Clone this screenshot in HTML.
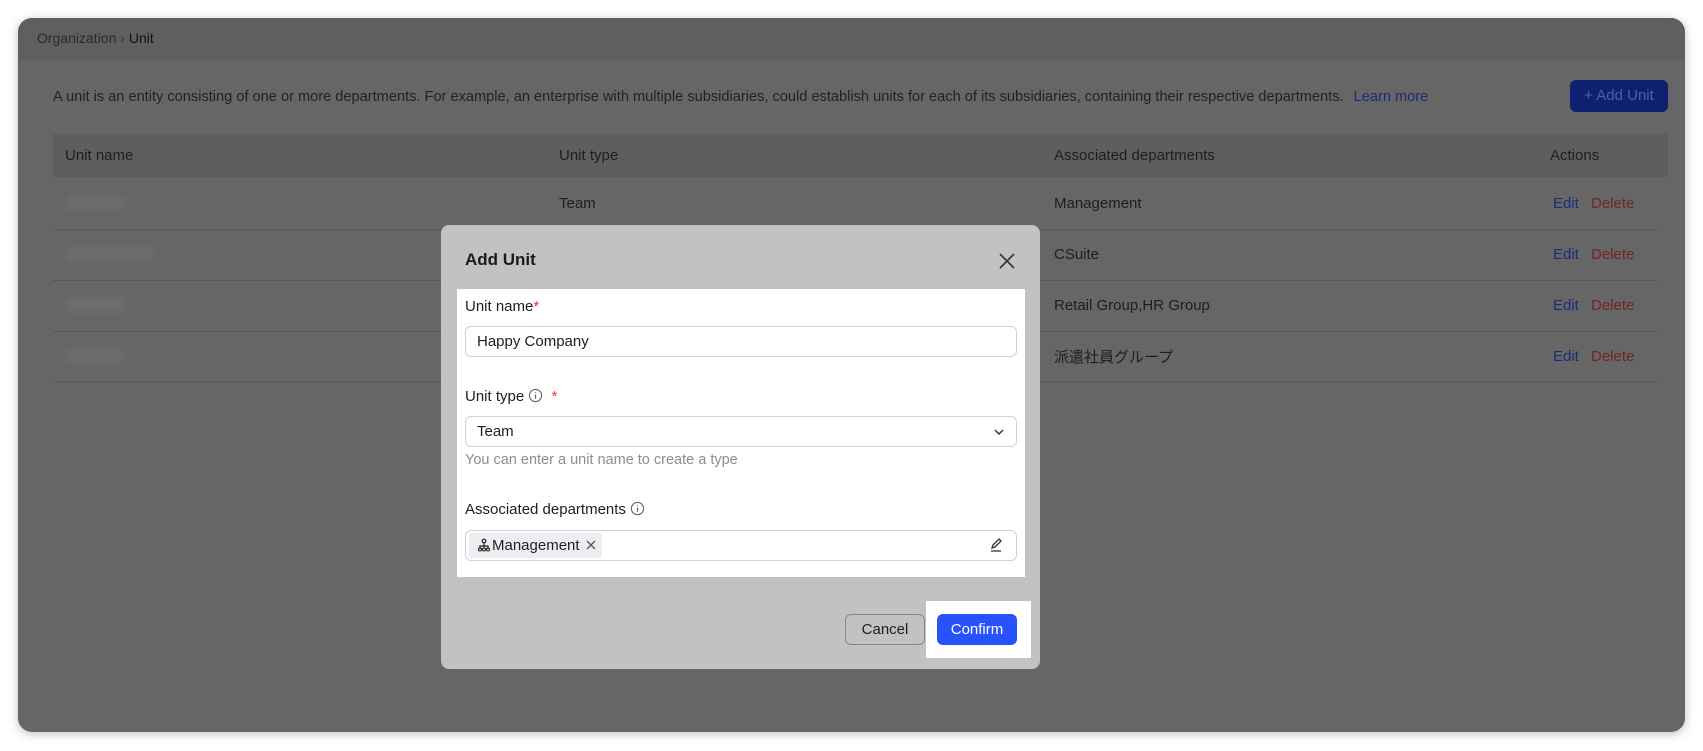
<!DOCTYPE html>
<html><head><meta charset="utf-8"><style>
*{box-sizing:border-box;margin:0;padding:0}
body{width:1703px;height:751px;background:#fff;font-family:"Liberation Sans","Noto Sans CJK JP",sans-serif;position:relative;overflow:hidden;color:#1f1f1f}
.win{position:absolute;left:18px;top:18px;width:1667px;height:714px;border-radius:14px;background:#666;overflow:hidden;box-shadow:0 2px 10px rgba(0,0,0,.25)}
.hdr{position:absolute;left:0;top:0;right:0;height:42px;background:#5f5f5f}
.a{position:absolute;white-space:nowrap}
.t{font-size:15px;color:#1e1e1e}
.sep{position:absolute;left:35px;width:1605px;height:1px;background:#565656}
.blur{position:absolute;background:#6e6e6e;filter:blur(4px);border-radius:6px}
.modal{position:absolute;left:441px;top:225px;width:599px;height:444px;background:#c2c2c2;border-radius:8px}
.inp{position:absolute;background:#fff;border:1px solid #cfd1d6;border-radius:6px}
.e{color:#1c2c78}.d{color:#782222}
</style></head><body>
<div class="win">
 <div class="hdr"></div>
 <div class="a" style="left:19px;top:12px;font-size:14px;color:#2a2a2a">Organization <span style="color:#333">&#x203A;</span> <span style="color:#111">Unit</span></div>
 <div class="a" style="left:35px;top:71px;font-size:14.6px;color:#222">A unit is an entity consisting of one or more departments. For example, an enterprise with multiple subsidiaries, could establish units for each of its subsidiaries, containing their respective departments. <span class="e" style="margin-left:6px">Learn more</span></div>
 <div class="a" style="left:1552px;top:62px;width:98px;height:32px;background:#102070;border-radius:6px;color:#5060a0;font-size:15px;line-height:32px;text-align:center">+ Add Unit</div>
 <div class="a" style="left:35px;top:116px;width:1615px;height:43px;background:#5e5e5e"></div>
 <div class="a t" style="left:47px;top:129px">Unit name</div>
 <div class="a t" style="left:541px;top:129px">Unit type</div>
 <div class="a t" style="left:1036px;top:129px">Associated departments</div>
 <div class="a t" style="left:1532px;top:129px">Actions</div>
 <div class="blur" style="left:47px;top:178px;width:60px;height:14px"></div>
 <div class="blur" style="left:47px;top:229px;width:90px;height:14px"></div>
 <div class="blur" style="left:47px;top:280px;width:60px;height:14px"></div>
 <div class="blur" style="left:47px;top:331px;width:60px;height:14px"></div>
 <div class="a t" style="left:541px;top:177px">Team</div>
 <div class="a t" style="left:1036px;top:177px">Management</div>
 <div class="a t" style="left:1036px;top:228px">CSuite</div>
 <div class="a t" style="left:1036px;top:279px">Retail Group,HR Group</div>
 <div class="a t" style="left:1036px;top:328px">派遣社員グループ</div>
 <div class="sep" style="top:211px"></div><div class="sep" style="top:262px"></div><div class="sep" style="top:313px"></div><div class="sep" style="top:363px"></div>
 <div class="a e" style="left:1535px;top:177px;font-size:15px">Edit</div><div class="a d" style="left:1573px;top:177px;font-size:15px">Delete</div>
 <div class="a e" style="left:1535px;top:228px;font-size:15px">Edit</div><div class="a d" style="left:1573px;top:228px;font-size:15px">Delete</div>
 <div class="a e" style="left:1535px;top:279px;font-size:15px">Edit</div><div class="a d" style="left:1573px;top:279px;font-size:15px">Delete</div>
 <div class="a e" style="left:1535px;top:330px;font-size:15px">Edit</div><div class="a d" style="left:1573px;top:330px;font-size:15px">Delete</div>
</div>
<div class="modal"></div>
<div class="a" style="left:465px;top:250px;font-size:17px;font-weight:bold;color:#1a1a1a">Add Unit</div>
<svg class="a" style="left:998px;top:252px" width="18" height="18" viewBox="0 0 18 18"><path d="M2 2L16 16M16 2L2 16" stroke="#333" stroke-width="1.6"/></svg>
<div class="a" style="left:457px;top:289px;width:568px;height:288px;background:#fff"></div>
<div class="a t" style="left:465px;top:298px">Unit name<span style="color:#e33">*</span></div>
<div class="inp" style="left:465px;top:326px;width:552px;height:31px"></div>
<div class="a t" style="left:477px;top:333px">Happy Company</div>
<div class="a t" style="left:465px;top:388px">Unit type <svg width="15" height="15" viewBox="0 0 16 16" style="vertical-align:-2px"><circle cx="8" cy="8" r="6.5" fill="none" stroke="#666" stroke-width="1.2"/><path d="M8 7v4.5M8 4.5v1" stroke="#666" stroke-width="1.4"/></svg> <span style="color:#e33;margin-left:4px">*</span></div>
<div class="inp" style="left:465px;top:416px;width:552px;height:31px"></div>
<div class="a t" style="left:477px;top:423px">Team</div>
<svg class="a" style="left:993px;top:427px" width="12" height="10" viewBox="0 0 12 10"><path d="M2 3l4 4 4-4" stroke="#333" stroke-width="1.5" fill="none"/></svg>
<div class="a" style="left:465px;top:452px;font-size:14.5px;color:#8a8d93">You can enter a unit name to create a type</div>
<div class="a t" style="left:465px;top:501px">Associated departments <svg width="15" height="15" viewBox="0 0 16 16" style="vertical-align:-2px"><circle cx="8" cy="8" r="6.5" fill="none" stroke="#666" stroke-width="1.2"/><path d="M8 7v4.5M8 4.5v1" stroke="#666" stroke-width="1.4"/></svg></div>
<div class="inp" style="left:465px;top:530px;width:552px;height:31px"></div>
<div class="a" style="left:469px;top:533px;width:133px;height:25px;background:#eceef1;border-radius:3px"></div>
<svg class="a" style="left:477px;top:538px" width="14" height="14" viewBox="0 0 14 14"><circle cx="7" cy="3" r="1.8" fill="none" stroke="#222" stroke-width="1.2"/><path d="M7 5v3M3 11V8h8v3" fill="none" stroke="#222" stroke-width="1.2"/><circle cx="3" cy="11.5" r="1.5" fill="none" stroke="#222" stroke-width="1.1"/><circle cx="7" cy="11.5" r="1.5" fill="none" stroke="#222" stroke-width="1.1"/><circle cx="11" cy="11.5" r="1.5" fill="none" stroke="#222" stroke-width="1.1"/><path d="M7 8v2" stroke="#222" stroke-width="1.2"/></svg>
<div class="a t" style="left:492px;top:537px">Management</div>
<svg class="a" style="left:585px;top:539px" width="12" height="12" viewBox="0 0 12 12"><path d="M2 2l8 8M10 2l-8 8" stroke="#555" stroke-width="1.3"/></svg>
<svg class="a" style="left:988px;top:537px" width="16" height="16" viewBox="0 0 16 16"><path d="M4 11l1-3 6-6 2 2-6 6zM3 14h10" fill="none" stroke="#333" stroke-width="1.3"/></svg>
<div class="a" style="left:926px;top:601px;width:105px;height:57px;background:#fff"></div>
<div class="a" style="left:845px;top:614px;width:80px;height:31px;border:1px solid #888;border-radius:6px;background:#c2c2c2;font-size:15px;line-height:29px;text-align:center;color:#1e1e1e">Cancel</div>
<div class="a" style="left:937px;top:614px;width:80px;height:31px;border-radius:6px;background:#2952ff;font-size:15px;line-height:31px;text-align:center;color:#fff">Confirm</div>
</body></html>
